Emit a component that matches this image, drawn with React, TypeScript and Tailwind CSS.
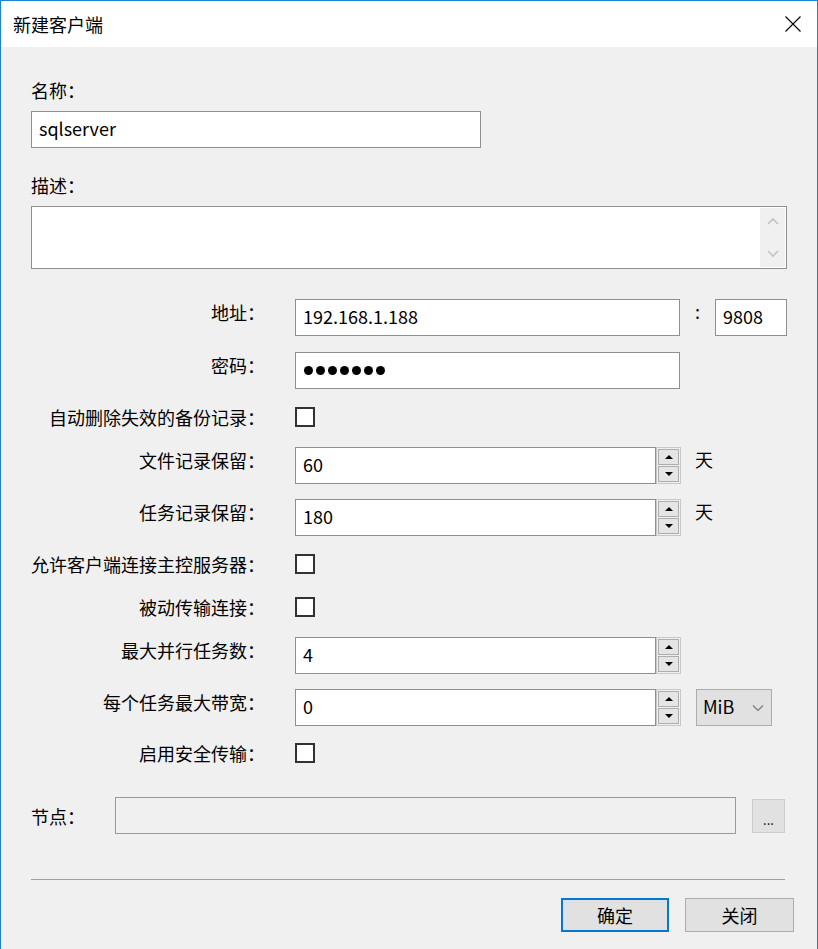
import React from "react";

const inputBox = "bg-white border border-[#8f8f8f] h-[37px] flex items-center pl-[7px] pb-[3px] text-[18px] leading-[24px]";

function Label({ children, center }: { children: React.ReactNode; center?: boolean }) {
  return (
    <div className={`w-[234px] shrink-0 text-right text-[18px] leading-[24px] ${center ? "" : "pt-[1px]"}`}>
      {children}
    </div>
  );
}

function Checkbox() {
  return <div className="ml-[30px] w-[20px] h-[20px] border-2 border-[#333333] bg-white" />;
}

function Spinner() {
  return (
    <div className="w-[25px] h-[37px] border border-[#c8c8c8] bg-[#f0f0f0] flex flex-col gap-[1px] p-[1px]">
      <div className="flex-1 bg-[#e5e5e5] border border-[#adadad] flex items-center justify-center">
        <div className="w-0 h-0 border-l-[4px] border-r-[4px] border-b-[4px] border-l-transparent border-r-transparent border-b-black" />
      </div>
      <div className="flex-1 bg-[#e5e5e5] border border-[#adadad] flex items-center justify-center">
        <div className="w-0 h-0 border-l-[4px] border-r-[4px] border-t-[4px] border-l-transparent border-r-transparent border-t-black" />
      </div>
    </div>
  );
}

function NumberField({ value }: { value: string }) {
  return (
    <div className="ml-[30px] flex">
      <div className={`${inputBox} w-[361px]`}>{value}</div>
      <Spinner />
    </div>
  );
}

export default function App() {
  return (
    <div className="w-[818px] h-[949px] bg-[#f0f0f0] border-x border-t border-[#1883d7] flex flex-col text-black font-['Noto_Sans_CJK_SC','Microsoft_YaHei',sans-serif]">
      {/* Title bar */}
      <div className="h-[46px] bg-white flex items-center justify-between pl-[12px] pr-[16px]">
        <span className="text-[18px] leading-[24px]">新建客户端</span>
        <svg width="16" height="16" viewBox="0 0 16 16" className="block">
          <path d="M0.5 0.5 L15.5 15.5 M15.5 0.5 L0.5 15.5" stroke="#000" strokeWidth="1.1" fill="none" />
        </svg>
      </div>

      <div className="flex flex-col px-[30px]">
        <div className="mt-[31px] text-[18px] leading-[24px]">名称：</div>
        <div className={`${inputBox} mt-[9px] w-[450px]`}>sqlserver</div>

        <div className="mt-[25px] text-[18px] leading-[24px]">描述：</div>
        <div className="mt-[9px] h-[63px] w-[756px] bg-white border border-[#8f8f8f] flex justify-end p-[1px]">
          <div className="w-[25px] h-full bg-[#f0f0f0] flex flex-col items-center justify-between py-[9px]">
            <svg width="12" height="8" viewBox="0 0 12 8">
              <path d="M1 7 L6 2 L11 7" stroke="#c2c2c2" strokeWidth="1.6" fill="none" />
            </svg>
            <svg width="12" height="8" viewBox="0 0 12 8">
              <path d="M1 1 L6 6 L11 1" stroke="#c2c2c2" strokeWidth="1.6" fill="none" />
            </svg>
          </div>
        </div>

        {/* 地址 */}
        <div className="mt-[30px] flex items-start">
          <Label>地址：</Label>
          <div className={`${inputBox} ml-[30px] w-[385px]`}>192.168.1.188</div>
          <div className="w-[35px] text-center text-[18px] leading-[24px]">:</div>
          <div className={`${inputBox} w-[72px]`}>9808</div>
        </div>

        {/* 密码 */}
        <div className="mt-[16px] flex items-start">
          <Label>密码：</Label>
          <div className="ml-[30px] w-[385px] h-[37px] bg-white border border-[#8f8f8f] flex items-center gap-[3px] pl-[8px] pb-[1px]">
            {Array.from({ length: 7 }).map((_, i) => (
              <div key={i} className="w-[9px] h-[9px] rounded-full bg-black" />
            ))}
          </div>
        </div>

        <div className="mt-[18px] flex items-center h-[20px]">
          <Label center>自动删除失效的备份记录：</Label>
          <Checkbox />
        </div>

        <div className="mt-[20px] flex items-start">
          <Label>文件记录保留：</Label>
          <NumberField value="60" />
          <div className="ml-[14px] text-[18px] leading-[24px]">天</div>
        </div>

        <div className="mt-[15px] flex items-start">
          <Label>任务记录保留：</Label>
          <NumberField value="180" />
          <div className="ml-[14px] text-[18px] leading-[24px]">天</div>
        </div>

        <div className="mt-[18px] flex items-center h-[20px]">
          <Label center>允许客户端连接主控服务器：</Label>
          <Checkbox />
        </div>

        <div className="mt-[23px] flex items-center h-[20px]">
          <Label center>被动传输连接：</Label>
          <Checkbox />
        </div>

        <div className="mt-[20px] flex items-start">
          <Label>最大并行任务数：</Label>
          <NumberField value="4" />
        </div>

        <div className="mt-[15px] flex items-start">
          <Label>每个任务最大带宽：</Label>
          <NumberField value="0" />
          <div className="ml-[15px] w-[76px] h-[37px] bg-[#e1e1e1] border border-[#adadad] flex items-center justify-between pl-[6px] pr-[7px] pb-[3px] text-[18px] leading-[24px]">
            <span>MiB</span>
            <svg width="12" height="8" viewBox="0 0 12 8" className="mt-[3px]">
              <path d="M1 1.5 L6 6.5 L11 1.5" stroke="#7a7a7a" strokeWidth="1.2" fill="none" />
            </svg>
          </div>
        </div>

        <div className="mt-[17px] flex items-center h-[20px]">
          <Label center>启用安全传输：</Label>
          <Checkbox />
        </div>

        {/* 节点 */}
        <div className="mt-[34px] flex items-center">
          <div className="w-[84px] shrink-0 text-[18px] leading-[24px]">节点：</div>
          <div className="w-[621px] h-[37px] bg-[#f0f0f0] border border-[#9a9a9a]" />
          <div className="ml-[16px] w-[33px] h-[34px] bg-[#e1e1e1] border border-[#cccccc] flex items-end justify-center pb-[6px] text-[13px] leading-[13px]">
            ...
          </div>
        </div>

        <div className="mt-[45px] mr-[2px] border-t border-[#a0a0a0]" />

        <div className="mt-[18px] -mr-[7px] flex justify-end gap-[16px]">
          <button className="w-[108px] h-[34px] bg-[#e1e1e1] border-2 border-[#0078d7] text-[18px] leading-[24px]">确定</button>
          <button className="w-[109px] h-[34px] bg-[#e1e1e1] border border-[#adadad] text-[18px] leading-[24px]">关闭</button>
        </div>
      </div>
    </div>
  );
}
